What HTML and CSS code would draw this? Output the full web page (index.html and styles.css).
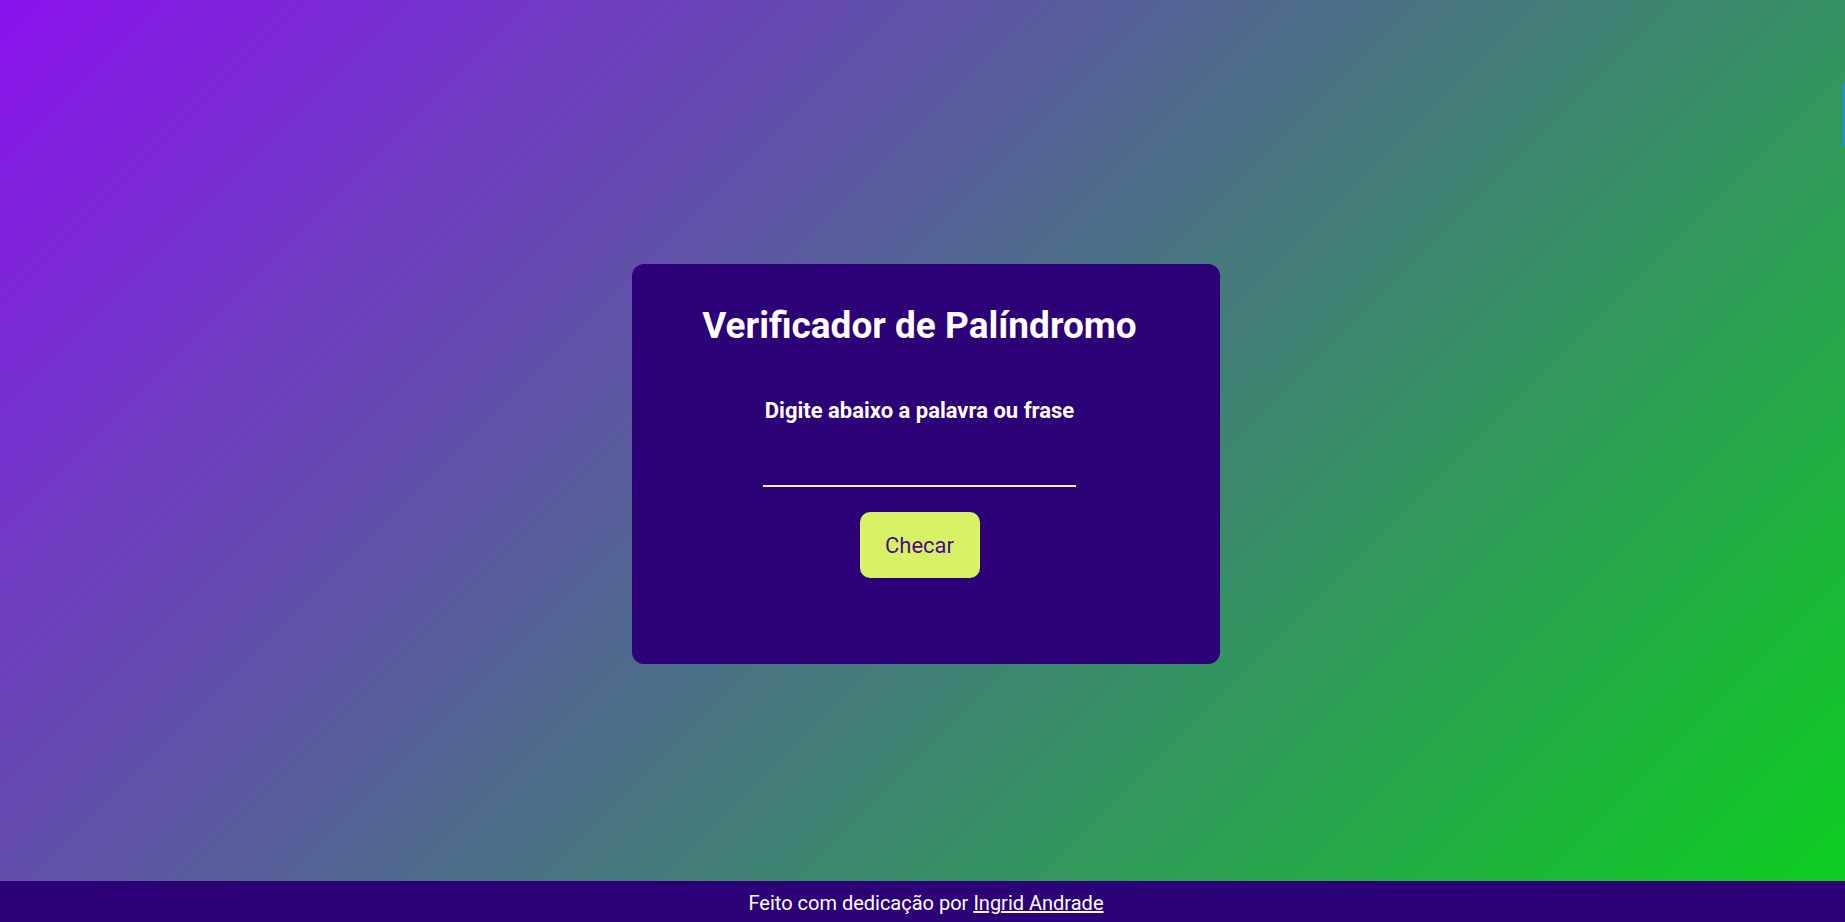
FILE: index.html
```html
<!DOCTYPE html>
<html lang="pt-BR">
<head>
<meta charset="utf-8">
<title>Verificador de Palíndromo</title>
<link rel="stylesheet" href="styles.css">
</head>
<body>
  <main class="main">
    <section class="card">
      <h1 class="title">Verificador de Palíndromo</h1>
      <h2 class="subtitle">Digite abaixo a palavra ou frase</h2>
      <input class="field" type="text" aria-label="Palavra ou frase">
      <button class="btn" type="button">Checar</button>
    </section>
  </main>
  <footer class="footer">
    Feito com dedicação por <a class="footer-link" href="#">Ingrid Andrade</a>
  </footer>
  <div class="edge-tab"></div>
</body>
</html>
```

FILE: styles.css
```css
* { box-sizing: border-box; }

html, body {
  margin: 0;
  padding: 0;
  height: 100%;
}

body {
  font-family: Roboto, "Liberation Sans", Arial, sans-serif;
  background: linear-gradient(135deg, #8a12ee 0%, #0bd01d 100%);
  min-height: 100vh;
  display: flex;
  flex-direction: column;
  overflow: hidden;
  position: relative;
}

.main {
  flex: 1;
  display: flex;
  justify-content: center;
  align-items: flex-start;
  padding-top: 264px;
  padding-left: 7px;
}

.card {
  width: 588px;
  height: 400px;
  background: #2c0077;
  border-radius: 12px;
  display: flex;
  flex-direction: column;
  align-items: center;
  padding: 40px 13px 0 0;
  color: #fff;
}

.title {
  margin: 0;
  font-size: 37px;
  font-weight: 700;
  line-height: 43px;
}

.subtitle {
  margin: 51px 0 0;
  font-size: 22px;
  font-weight: 700;
  line-height: 25px;
}

.field {
  margin-top: 32px;
  width: 313px;
  height: 32px;
  background: transparent;
  border: none;
  border-bottom: 2px solid #f2f2f2;
  outline: none;
  color: #fff;
  font-family: inherit;
  font-size: 18px;
}

.btn {
  margin-top: 25px;
  width: 120px;
  height: 66px;
  border: none;
  border-radius: 10px;
  background: #d8f266;
  color: #4b0a8f;
  font-family: inherit;
  font-size: 22px;
  cursor: pointer;
}

.footer {
  height: 41px;
  background: #2c0077;
  color: #fff;
  font-size: 20px;
  display: flex;
  align-items: center;
  justify-content: center;
  padding-top: 3px;
  padding-left: 7px;
}

.footer-link {
  color: #fff;
  margin-left: 5px;
  text-decoration: underline;
}

.edge-tab {
  position: absolute;
  top: 79px;
  right: -10px;
  width: 12px;
  height: 70px;
  border-radius: 6px;
  background: #1e8ff0;
}
```
